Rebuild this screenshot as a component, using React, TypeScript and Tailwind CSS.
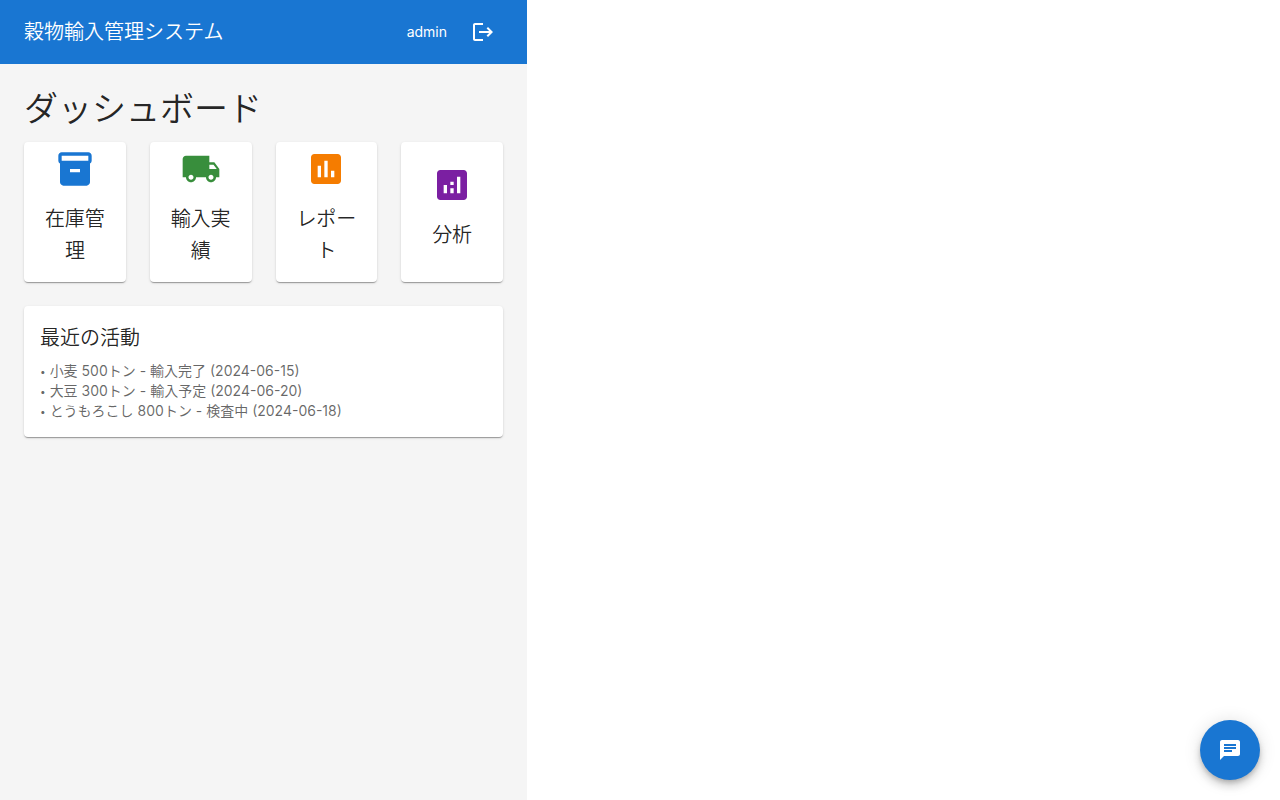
import React from "react";
import { MdInventory2, MdLocalShipping, MdAssessment, MdAnalytics, MdChat, MdLogout } from "react-icons/md";

const tiles = [
  { label: "在庫管理", Icon: MdInventory2, color: "text-[#1976d2]" },
  { label: "輸入実績", Icon: MdLocalShipping, color: "text-[#388e3c]" },
  { label: "レポート", Icon: MdAssessment, color: "text-[#f57c00]" },
  { label: "分析", Icon: MdAnalytics, color: "text-[#7b1fa2]" },
];

const activities = [
  "小麦 500トン - 輸入完了 (2024-06-15)",
  "大豆 300トン - 輸入予定 (2024-06-20)",
  "とうもろこし 800トン - 検査中 (2024-06-18)",
];

const cardShadow =
  "shadow-[0px_2px_1px_-1px_rgba(0,0,0,0.2),0px_1px_1px_0px_rgba(0,0,0,0.14),0px_1px_3px_0px_rgba(0,0,0,0.12)]";

export default function App() {
  return (
    <div className="min-h-screen bg-white font-['Inter','Noto_Sans_CJK_JP',sans-serif] text-black/87 antialiased">
      <div className="flex min-h-screen w-[527px] max-w-full flex-col bg-[#f5f5f5]">
        <header className="flex h-16 items-center bg-[#1976d2] px-6 text-white">
          <div className="grow text-xl font-[350]">穀物輸入管理システム</div>
          <span className="mr-4 text-sm">admin</span>
          <button type="button" aria-label="ログアウト" className="cursor-pointer rounded-full p-2">
            <MdLogout className="size-6" />
          </button>
        </header>
        <main className="px-6 pt-6">
          <h1 className="mb-3 text-[34px] leading-[42px] font-[350]">ダッシュボード</h1>
          <div className="grid grid-cols-4 gap-6">
            {tiles.map(({ label, Icon, color }) => (
              <button
                key={label}
                type="button"
                className={`flex h-[140px] cursor-pointer flex-col items-center justify-center rounded bg-white px-4 ${cardShadow}`}
              >
                <Icon className={`mb-[14px] size-10 ${color}`} />
                <span className="mb-2 text-xl leading-8 font-[350]">{label}</span>
              </button>
            ))}
          </div>
          <section className={`mt-6 rounded bg-white p-4 ${cardShadow}`}>
            <h2 className="mb-[7px] text-xl leading-8 font-[350]">最近の活動</h2>
            <ul className="text-sm leading-5 text-black/60">
              {activities.map((text) => (
                <li key={text} className="flex h-5 items-center gap-1">
                  <span className="text-[10px]">•</span>
                  <span>{text}</span>
                </li>
              ))}
            </ul>
          </section>
        </main>
      </div>
      <button
        type="button"
        aria-label="チャット"
        className="fixed right-5 bottom-5 flex size-[60px] cursor-pointer items-center justify-center rounded-full bg-[#1976d2] text-white shadow-[0px_3px_5px_-1px_rgba(0,0,0,0.2),0px_6px_10px_0px_rgba(0,0,0,0.14),0px_1px_18px_0px_rgba(0,0,0,0.12)]"
      >
        <MdChat className="size-6" />
      </button>
    </div>
  );
}
